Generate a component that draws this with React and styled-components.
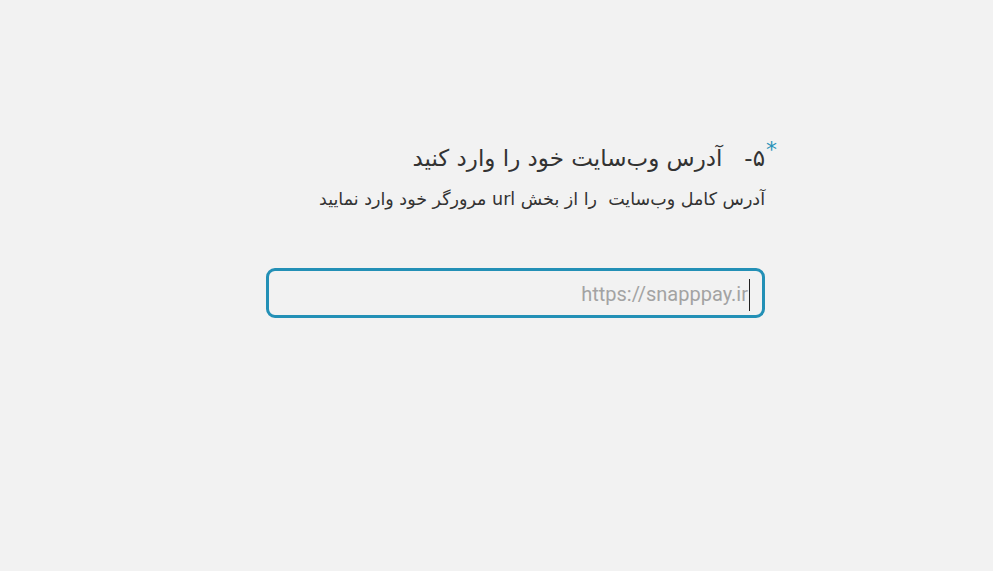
import React from "react";
import styled, { createGlobalStyle } from "styled-components";

const Global = createGlobalStyle`
  html, body { margin: 0; padding: 0; background: #f2f2f2; }
  body { font-family: "DejaVu Sans", "Noto Sans", sans-serif; }
`;

const Page = styled.div`
  min-height: 571px;
  padding-top: 138px;
  padding-left: 266px;
  box-sizing: border-box;
`;

const Form = styled.div`
  width: 499px;
  direction: rtl;
  display: flex;
  flex-direction: column;
`;

const Title = styled.h2`
  position: relative;
  margin: 0;
  font-weight: 400;
  font-size: 23px;
  line-height: 40px;
  color: #333;
  white-space: pre;
`;

const Star = styled.span`
  position: absolute;
  right: -12px;
  top: 1px;
  color: #2a93b8;
  font-size: 22px;
  line-height: 22px;
`;

const Hint = styled.p`
  margin: 7px 0 0;
  font-size: 17.5px;
  line-height: 28px;
  color: #333;
  white-space: pre;
`;

const Field = styled.div`
  margin-top: 55px;
  height: 50px;
  border: 3px solid #2390b6;
  border-radius: 9px;
  box-sizing: border-box;
  display: flex;
  align-items: center;
  padding: 2px 14px 0 14px;
`;

const Placeholder = styled.span`
  direction: ltr;
  font-family: Roboto, "Liberation Sans", sans-serif;
  font-size: 20px;
  color: #a3a3a3;
  position: relative;
`;

const Caret = styled.span`
  position: absolute;
  right: -2px;
  top: -3px;
  width: 1px;
  height: 32px;
  background: #222;
`;

export default function App() {
  return (
    <>
      <Global />
      <Page>
        <Form>
          <Title>
            <Star>*</Star>
            ۵-   آدرس وب‌سایت خود را وارد کنید
          </Title>
          <Hint>آدرس کامل وب‌سایت  را از بخش url مرورگر خود وارد نمایید</Hint>
          <Field>
            <Placeholder>
              https://snapppay.ir
              <Caret />
            </Placeholder>
          </Field>
        </Form>
      </Page>
    </>
  );
}
